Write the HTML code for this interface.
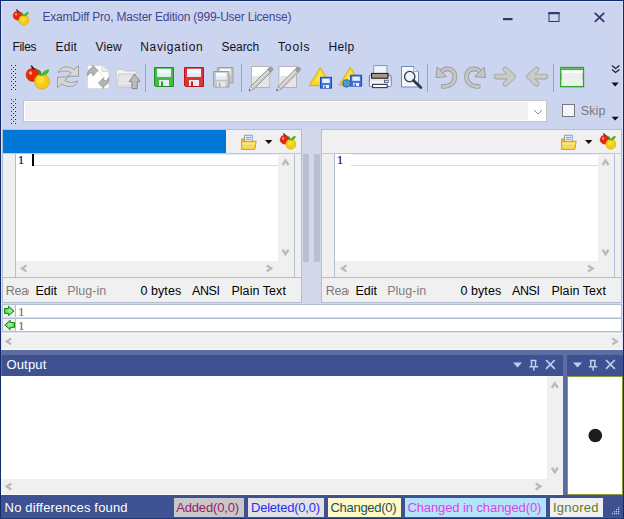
<!DOCTYPE html>
<html><head><meta charset="utf-8">
<style>
html,body{margin:0;padding:0;}
body{width:624px;height:519px;position:relative;overflow:hidden;background:#ccd5f0;font-family:"Liberation Sans",sans-serif;}
.a{position:absolute;box-sizing:border-box;}
.t{position:absolute;white-space:pre;}
svg{position:absolute;overflow:visible;}
</style></head><body>
<div class=a style='left:0px;top:0px;width:624px;height:1px;background:#102c6c;'></div>
<div class=a style='left:0px;top:0px;width:1px;height:519px;background:#102c6c;'></div>
<div class=a style='left:623px;top:0px;width:1px;height:519px;background:#102c6c;'></div>
<div class=a style='left:1px;top:1px;width:622px;height:1px;background:#d9e1fa;'></div>
<div class=a style='left:1px;top:1px;width:1px;height:352px;background:#d9e1fa;'></div>
<div class=a style='left:622px;top:1px;width:1px;height:352px;background:#d9e1fa;'></div>
<div class=a style='left:23px;top:100px;width:524px;height:22px;background:#f0f0f0;border:1px solid #c4c4c4;box-shadow:inset 0 0 0 1px #ffffff;'></div>
<div class=a style='left:528px;top:101px;width:18px;height:20px;background:#ffffff;'></div>
<div class=a style='left:562px;top:104px;width:13px;height:13px;background:#f2f6fa;border:1px solid #7a7a7a;'></div>
<div class=a style='left:2px;top:129px;width:300px;height:25px;background:#f0f0f0;border:1px solid #b4bdd2;border-bottom-color:#c0c8da;'></div>
<div class=a style='left:3px;top:130px;width:223px;height:23px;background:#0078d7;'></div>
<div class=a style='left:2px;top:154px;width:300px;height:124px;background:#f0f0f0;border:1px solid #b4bdd2;border-top:0;'></div>
<div class=a style='left:15px;top:154px;width:1px;height:123px;background:#b4bdd2;'></div>
<div class=a style='left:16px;top:154px;width:262px;height:107px;background:#ffffff;'></div>
<div class=a style='left:294px;top:154px;width:1px;height:123px;background:#b4bdd2;'></div>
<div class=a style='left:2px;top:277px;width:300px;height:26px;background:#f0f0f0;border:1px solid #b4bdd2;'></div>
<div class=a style='left:32px;top:165px;width:246px;height:1px;background:#d0def6;'></div>
<div class=a style='left:32px;top:154px;width:246px;height:1px;background:#e2ebfb;'></div>
<div class=a style='left:321px;top:129px;width:301px;height:25px;background:#f0f0f0;border:1px solid #b4bdd2;border-bottom-color:#c0c8da;'></div>
<div class=a style='left:321px;top:154px;width:301px;height:124px;background:#f0f0f0;border:1px solid #b4bdd2;border-top:0;'></div>
<div class=a style='left:334px;top:154px;width:1px;height:123px;background:#b4bdd2;'></div>
<div class=a style='left:335px;top:154px;width:263px;height:107px;background:#ffffff;'></div>
<div class=a style='left:614px;top:154px;width:1px;height:123px;background:#b4bdd2;'></div>
<div class=a style='left:321px;top:277px;width:301px;height:26px;background:#f0f0f0;border:1px solid #b4bdd2;'></div>
<div class=a style='left:351px;top:165px;width:247px;height:1px;background:#d0def6;'></div>
<div class=a style='left:351px;top:154px;width:247px;height:1px;background:#e2ebfb;'></div>
<div class=a style='left:32px;top:154px;width:2px;height:12px;background:#000000;'></div>
<div class=a style='left:302px;top:129px;width:19px;height:174px;background:#d3d9ea;'></div>
<div class=a style='left:303px;top:154px;width:6px;height:108px;background:#b9c1d1;'></div>
<div class=a style='left:314px;top:154px;width:6px;height:108px;background:#b9c1d1;'></div>
<div class=a style='left:2px;top:303px;width:620px;height:1px;background:#d3d9ea;'></div>
<div class=a style='left:2px;top:304px;width:620px;height:1px;background:#b4bdd2;'></div>
<div class=a style='left:2px;top:317px;width:620px;height:1px;background:#d8dce8;'></div>
<div class=a style='left:2px;top:318px;width:620px;height:1px;background:#b4bdd2;'></div>
<div class=a style='left:2px;top:331px;width:620px;height:1px;background:#b4bdd2;'></div>
<div class=a style='left:2px;top:332px;width:620px;height:1px;background:#d8dce8;'></div>
<div class=a style='left:2px;top:333px;width:620px;height:1px;background:#fafafa;'></div>
<div class=a style='left:2px;top:304px;width:1px;height:28px;background:#b4bdd2;'></div>
<div class=a style='left:621px;top:304px;width:1px;height:28px;background:#b4bdd2;'></div>
<div class=a style='left:3px;top:305px;width:12px;height:12px;background:#f0f0f0;'></div>
<div class=a style='left:15px;top:305px;width:1px;height:12px;background:#b4bdd2;'></div>
<div class=a style='left:16px;top:305px;width:605px;height:12px;background:#ffffff;'></div>
<div class=a style='left:3px;top:319px;width:12px;height:12px;background:#f0f0f0;'></div>
<div class=a style='left:15px;top:319px;width:1px;height:12px;background:#b4bdd2;'></div>
<div class=a style='left:16px;top:319px;width:605px;height:12px;background:#ffffff;'></div>
<div class=a style='left:2px;top:334px;width:620px;height:15px;background:#f0f0f0;'></div>
<div class=a style='left:2px;top:349px;width:620px;height:1px;background:#fafafa;'></div>
<div class=a style='left:1px;top:350px;width:622px;height:5px;background:#5d6da2;'></div>
<div class=a style='left:1px;top:355px;width:562px;height:21px;background:#3e5291;'></div>
<div class=a style='left:563px;top:355px;width:4px;height:140px;background:#5d6da2;'></div>
<div class=a style='left:567px;top:355px;width:56px;height:21px;background:#3e5291;'></div>
<div class=a style='left:1px;top:355px;width:1px;height:140px;background:#5d6da2;'></div>
<div class=a style='left:1px;top:376px;width:546px;height:103px;background:#ffffff;'></div>
<div class=a style='left:547px;top:376px;width:16px;height:103px;background:#f0f0f0;'></div>
<div class=a style='left:1px;top:479px;width:562px;height:15px;background:#f0f0f0;'></div>
<div class=a style='left:1px;top:494px;width:562px;height:1px;background:#f8f8f8;'></div>
<div class=a style='left:567px;top:376px;width:56px;height:119px;background:#ffffff;border:1px solid #8c9a3c;'></div>
<div class=a style='left:1px;top:495px;width:622px;height:24px;background:#3e5291;'></div>
<div class=a style='left:0px;top:518px;width:624px;height:1px;background:#1f3a7c;'></div>
<div class=a style='left:174px;top:498px;width:70px;height:19px;background:#c8c8c8;'></div>
<div class=a style='left:248px;top:498px;width:76px;height:19px;background:#e2e2e6;'></div>
<div class=a style='left:328px;top:498px;width:73px;height:19px;background:#fff8c8;'></div>
<div class=a style='left:405px;top:498px;width:140.5px;height:19px;background:#b4e4fc;'></div>
<div class=a style='left:550px;top:498px;width:53px;height:19px;background:#f0f0f0;'></div>
<svg width='624' height='519' style='left:0;top:0;position:absolute'><g transform='translate(13,9) scale(0.68)'>
<ellipse cx='7' cy='9.8' rx='6.9' ry='6.6' fill='#e8280c' stroke='#c01a00' stroke-width='0.6'/>
<circle cx='4.6' cy='8' r='1.7' fill='#f8b070'/>
<path d='M5.2,0.6 L8,4.4' stroke='#101010' stroke-width='1.5' fill='none'/>
<circle cx='16' cy='16.5' r='7.5' fill='#f4cc14' stroke='#d8a400' stroke-width='0.7'/>
<circle cx='14.6' cy='15' r='3.6' fill='#fae048' opacity='0.8'/>
<path d='M15.5,10.8 C12.5,10.5 11.6,6.8 12.2,4.6 C14.5,5.2 16,7.5 15.5,10.8 Z' fill='#2c9c1c'/>
<path d='M15.5,10.8 C16.2,6.8 19.6,4.4 23.2,4.6 C22.8,8.6 19.4,11 15.5,10.8 Z' fill='#44b82c'/>
</g>
<g transform='translate(26,65) scale(1.0)'>
<ellipse cx='7' cy='9.8' rx='6.9' ry='6.6' fill='#e8280c' stroke='#c01a00' stroke-width='0.6'/>
<circle cx='4.6' cy='8' r='1.7' fill='#f8b070'/>
<path d='M5.2,0.6 L8,4.4' stroke='#101010' stroke-width='1.5' fill='none'/>
<circle cx='16' cy='16.5' r='7.5' fill='#f4cc14' stroke='#d8a400' stroke-width='0.7'/>
<circle cx='14.6' cy='15' r='3.6' fill='#fae048' opacity='0.8'/>
<path d='M15.5,10.8 C12.5,10.5 11.6,6.8 12.2,4.6 C14.5,5.2 16,7.5 15.5,10.8 Z' fill='#2c9c1c'/>
<path d='M15.5,10.8 C16.2,6.8 19.6,4.4 23.2,4.6 C22.8,8.6 19.4,11 15.5,10.8 Z' fill='#44b82c'/>
</g>
<g transform='translate(280,133) scale(0.68)'>
<ellipse cx='7' cy='9.8' rx='6.9' ry='6.6' fill='#e8280c' stroke='#c01a00' stroke-width='0.6'/>
<circle cx='4.6' cy='8' r='1.7' fill='#f8b070'/>
<path d='M5.2,0.6 L8,4.4' stroke='#101010' stroke-width='1.5' fill='none'/>
<circle cx='16' cy='16.5' r='7.5' fill='#f4cc14' stroke='#d8a400' stroke-width='0.7'/>
<circle cx='14.6' cy='15' r='3.6' fill='#fae048' opacity='0.8'/>
<path d='M15.5,10.8 C12.5,10.5 11.6,6.8 12.2,4.6 C14.5,5.2 16,7.5 15.5,10.8 Z' fill='#2c9c1c'/>
<path d='M15.5,10.8 C16.2,6.8 19.6,4.4 23.2,4.6 C22.8,8.6 19.4,11 15.5,10.8 Z' fill='#44b82c'/>
</g>
<g transform='translate(600,133) scale(0.68)'>
<ellipse cx='7' cy='9.8' rx='6.9' ry='6.6' fill='#e8280c' stroke='#c01a00' stroke-width='0.6'/>
<circle cx='4.6' cy='8' r='1.7' fill='#f8b070'/>
<path d='M5.2,0.6 L8,4.4' stroke='#101010' stroke-width='1.5' fill='none'/>
<circle cx='16' cy='16.5' r='7.5' fill='#f4cc14' stroke='#d8a400' stroke-width='0.7'/>
<circle cx='14.6' cy='15' r='3.6' fill='#fae048' opacity='0.8'/>
<path d='M15.5,10.8 C12.5,10.5 11.6,6.8 12.2,4.6 C14.5,5.2 16,7.5 15.5,10.8 Z' fill='#2c9c1c'/>
<path d='M15.5,10.8 C16.2,6.8 19.6,4.4 23.2,4.6 C22.8,8.6 19.4,11 15.5,10.8 Z' fill='#44b82c'/>
</g>
<rect x='11' y='65' width='1' height='1' fill='#1a2a6a'/><rect x='15' y='65' width='1' height='1' fill='#1a2a6a'/>
<rect x='13' y='67' width='1' height='1' fill='#1a2a6a'/>
<rect x='11' y='69' width='1' height='1' fill='#1a2a6a'/><rect x='15' y='69' width='1' height='1' fill='#1a2a6a'/>
<rect x='13' y='71' width='1' height='1' fill='#1a2a6a'/>
<rect x='11' y='73' width='1' height='1' fill='#1a2a6a'/><rect x='15' y='73' width='1' height='1' fill='#1a2a6a'/>
<rect x='13' y='75' width='1' height='1' fill='#1a2a6a'/>
<rect x='11' y='77' width='1' height='1' fill='#1a2a6a'/><rect x='15' y='77' width='1' height='1' fill='#1a2a6a'/>
<rect x='13' y='79' width='1' height='1' fill='#1a2a6a'/>
<rect x='11' y='81' width='1' height='1' fill='#1a2a6a'/><rect x='15' y='81' width='1' height='1' fill='#1a2a6a'/>
<rect x='13' y='83' width='1' height='1' fill='#1a2a6a'/>
<rect x='11' y='85' width='1' height='1' fill='#1a2a6a'/><rect x='15' y='85' width='1' height='1' fill='#1a2a6a'/>
<rect x='13' y='87' width='1' height='1' fill='#1a2a6a'/>
<rect x='11' y='89' width='1' height='1' fill='#1a2a6a'/><rect x='15' y='89' width='1' height='1' fill='#1a2a6a'/>
<rect x='11' y='99' width='1' height='1' fill='#1a2a6a'/><rect x='15' y='99' width='1' height='1' fill='#1a2a6a'/>
<rect x='13' y='101' width='1' height='1' fill='#1a2a6a'/>
<rect x='11' y='103' width='1' height='1' fill='#1a2a6a'/><rect x='15' y='103' width='1' height='1' fill='#1a2a6a'/>
<rect x='13' y='105' width='1' height='1' fill='#1a2a6a'/>
<rect x='11' y='107' width='1' height='1' fill='#1a2a6a'/><rect x='15' y='107' width='1' height='1' fill='#1a2a6a'/>
<rect x='13' y='109' width='1' height='1' fill='#1a2a6a'/>
<rect x='11' y='111' width='1' height='1' fill='#1a2a6a'/><rect x='15' y='111' width='1' height='1' fill='#1a2a6a'/>
<rect x='13' y='113' width='1' height='1' fill='#1a2a6a'/>
<rect x='11' y='115' width='1' height='1' fill='#1a2a6a'/><rect x='15' y='115' width='1' height='1' fill='#1a2a6a'/>
<rect x='13' y='117' width='1' height='1' fill='#1a2a6a'/>
<rect x='11' y='119' width='1' height='1' fill='#1a2a6a'/><rect x='15' y='119' width='1' height='1' fill='#1a2a6a'/>
<rect x='13' y='121' width='1' height='1' fill='#1a2a6a'/>
<rect x='11' y='123' width='1' height='1' fill='#1a2a6a'/><rect x='15' y='123' width='1' height='1' fill='#1a2a6a'/>
<rect x='145' y='64' width='1' height='28' fill='#94a4cc'/>
<rect x='241' y='64' width='1' height='28' fill='#94a4cc'/>
<rect x='427' y='64' width='1' height='28' fill='#94a4cc'/>
<rect x='553' y='64' width='1' height='28' fill='#94a4cc'/>
<g transform='translate(54,62)' stroke='#969696' stroke-width='0.9' fill='#d6d6d6'>
<path d='M4.2,10.6 C6,4.5 14,2.8 20,7.6 L24.5,3.8 L24.5,14.3 L13.6,14.3 L17.2,11 C13,8.3 8.5,8.5 4.2,10.6 Z'/>
<path d='M23.8,18.8 C22,24.9 14,26.6 8,21.8 L3.5,25.6 L3.5,15.1 L14.4,15.1 L10.8,18.4 C15,21.1 19.5,20.9 23.8,18.8 Z'/>
</g>
<g transform='translate(84,62)'>
<path d='M3.6,3.4 L18,3.4 L24.8,9.5 L24.8,26.4 L3.6,26.4 Z' fill='#ffffff' stroke='#d4d4d4' stroke-width='0.8'/>
<path d='M18,3.4 L18,9.5 L24.8,9.5' fill='#eeeeee' stroke='#cfcfcf' stroke-width='0.8'/>
<path d='M9,3.6 L19,14.5' stroke='#d8d8d8' stroke-width='0.8'/>
<path d='M3.6,13.8 C3.4,8.6 5.4,6.2 8.6,5.8 L8.6,3.2 L14,8.6 L8.6,14 L8.6,10.8 C6.4,10.8 4.6,12 3.6,13.8 Z' fill='#b4b4b4' stroke='#8a8a8a' stroke-width='0.7' stroke-linejoin='round'/>
<path d='M24.8,15.8 C25,21 23,23.4 19.8,23.8 L19.8,26.4 L14.4,21 L19.8,15.6 L19.8,18.8 C22,18.8 23.8,17.6 24.8,15.8 Z' fill='#b4b4b4' stroke='#8a8a8a' stroke-width='0.7' stroke-linejoin='round'/>
</g>
<g transform='translate(113,64)'>
<path d='M3.2,6.8 L3.4,5.4 L11,5.4 L12,7 L23.4,7 L23.4,23.6 L3.2,23.6 Z' fill='#f2f2f2' stroke='#c4c4c4' stroke-width='0.9'/>
<path d='M5.8,10 L26.4,10 L24.4,22 L4.2,22 Z' fill='#e6e6e6' stroke='#c8c8c8' stroke-width='0.9'/>
<path d='M21.6,10 L27,17.6 L24.2,17.6 L24.2,24.6 L19,24.6 L19,17.6 L16.2,17.6 Z' fill='#bdbdbd' stroke='#7e7e7e' stroke-width='0.9'/>
</g>
<g>
<path d='M154.5,67.5 L173.5,67.5 L173.5,86.5 L155.5,86.5 L154.5,85.5 Z' fill='#44bb44' stroke='#23892a' stroke-width='1'/>
<rect x='157' y='68.8' width='14' height='8.0' fill='#f4f8ff'/>
<rect x='157' y='73.2' width='14' height='3.6' fill='#e4ecf4'/>
<rect x='159.0' y='80.0' width='10.0' height='6.0' fill='#e8ecf0'/>
<rect x='161.0' y='81.5' width='2.0' height='4.5' fill='#2a9a2a'/>
</g>
<g>
<path d='M184.5,67.5 L203.5,67.5 L203.5,86.5 L185.5,86.5 L184.5,85.5 Z' fill='#e03434' stroke='#b81818' stroke-width='1'/>
<rect x='187' y='68.8' width='14' height='8.0' fill='#f4f8ff'/>
<rect x='187' y='73.2' width='14' height='3.6' fill='#e4ecf4'/>
<rect x='189.0' y='80.0' width='10.0' height='6.0' fill='#e8ecf0'/>
<rect x='191.0' y='81.5' width='2.0' height='4.5' fill='#c02020'/>
</g>
<g>
<path d='M217.5,67.5 L233.0,67.5 L233.0,83.0 L218.5,83.0 L217.5,82.0 Z' fill='#c4c4c4' stroke='#a0a0a0' stroke-width='1'/>
<rect x='220' y='68.8' width='10.5' height='6.6000000000000005' fill='#f4f8ff'/>
<rect x='220' y='72.42999999999999' width='10.5' height='2.97' fill='#e4ecf4'/>
<rect x='221.125' y='77.725' width='8.25' height='4.95' fill='#e8ecf0'/>
<rect x='222.775' y='78.96249999999999' width='1.6500000000000001' height='3.7125000000000004' fill='#a8a8a8'/>
</g>
<g>
<path d='M213.5,71.5 L229.0,71.5 L229.0,87.0 L214.5,87.0 L213.5,86.0 Z' fill='#c8c8c8' stroke='#9c9c9c' stroke-width='1'/>
<rect x='216' y='72.8' width='10.5' height='6.6000000000000005' fill='#f4f8ff'/>
<rect x='216' y='76.42999999999999' width='10.5' height='2.97' fill='#e4ecf4'/>
<rect x='217.125' y='81.725' width='8.25' height='4.95' fill='#e8ecf0'/>
<rect x='218.775' y='82.96249999999999' width='1.6500000000000001' height='3.7125000000000004' fill='#a0a0a0'/>
</g>
<g transform='translate(247,62)'>
<rect x='4.5' y='4.5' width='17.5' height='21' fill='#ffffff' stroke='#b4b4b4' stroke-width='1'/>
<rect x='5' y='14' width='16.5' height='11' fill='#e6e6e6'/>
<path d='M3.5,24.5 L20.5,7.5 L23.5,10.5 L6.5,27.5 Z' fill='#c8c8c8' stroke='#909090' stroke-width='0.8'/>
<path d='M20.5,7.5 L22.5,5.5 C23.2,4.8 24.2,4.8 24.9,5.5 L25.5,6.1 C26.2,6.8 26.2,7.8 25.5,8.5 L23.5,10.5 Z' fill='#a0a0a0' stroke='#888' stroke-width='0.6'/>
<path d='M3.5,24.5 L6.5,27.5 L1.8,28.8 Z' fill='#e8e8e8' stroke='#888' stroke-width='0.5'/>
<path d='M2.6,26.9 L3.9,28.2 L1.8,28.8 Z' fill='#404040'/>
<path d='M5.5,25 L21.5,9' stroke='#eeeeee' stroke-width='0.9'/>
</g>
<g transform='translate(274.5,62)'>
<rect x='4.5' y='4.5' width='17.5' height='21' fill='#ffffff' stroke='#b4b4b4' stroke-width='1'/>
<rect x='5' y='14' width='16.5' height='11' fill='#e6e6e6'/>
<path d='M3.5,24.5 L20.5,7.5 L23.5,10.5 L6.5,27.5 Z' fill='#c8c8c8' stroke='#909090' stroke-width='0.8'/>
<path d='M20.5,7.5 L22.5,5.5 C23.2,4.8 24.2,4.8 24.9,5.5 L25.5,6.1 C26.2,6.8 26.2,7.8 25.5,8.5 L23.5,10.5 Z' fill='#a0a0a0' stroke='#888' stroke-width='0.6'/>
<path d='M3.5,24.5 L6.5,27.5 L1.8,28.8 Z' fill='#e8e8e8' stroke='#888' stroke-width='0.5'/>
<path d='M2.6,26.9 L3.9,28.2 L1.8,28.8 Z' fill='#404040'/>
<path d='M5.5,25 L21.5,9' stroke='#eeeeee' stroke-width='0.9'/>
</g>
<g transform='translate(306,63)'>
<path d='M14.3,4.6 L25.5,22.6 L3.2,22.6 Z' fill='#f6d428' stroke='#e0a410' stroke-width='0.9' stroke-linejoin='round'/>
<path d='M14.3,7.5 L21,19 L8,19 Z' fill='#fae868' opacity='0.6'/>
</g>
<g>
<rect x='320.5' y='77.3' width='11' height='10.8' fill='#3f78dc' stroke='#1d4cb8' stroke-width='1'/>
<rect x='322.2' y='78.6' width='7.6' height='4.4' fill='#e6eef8'/>
<rect x='323.2' y='85' width='5.8' height='3' fill='#f4f4f4'/>
<rect x='324.4' y='85.6' width='1.4' height='2.4' fill='#2050c0'/>
</g>
<g transform='translate(336,62.5)'>
<path d='M14.3,4.6 L25.5,22.6 L3.2,22.6 Z' fill='#f6d428' stroke='#e0a410' stroke-width='0.9' stroke-linejoin='round'/>
<path d='M14.3,7.5 L21,19 L8,19 Z' fill='#fae868' opacity='0.6'/>
</g>
<g>
<rect x='350.6' y='75.2' width='11' height='10.9' fill='#3f78dc' stroke='#1d4cb8' stroke-width='1'/>
<rect x='352.3' y='76.6' width='7.6' height='4.2' fill='#e6eef8'/>
<rect x='353.3' y='83' width='5.8' height='3' fill='#f4f4f4'/>
<rect x='354.5' y='83.6' width='1.4' height='2.4' fill='#2050c0'/>
<circle cx='346.5' cy='83.4' r='3.8' fill='#4a90d8' stroke='#2060a8' stroke-width='0.8'/>
<path d='M344,81 C345.5,82 346,83.5 345,85.5 M348,80.5 C349,82 349.5,84 348.5,86' stroke='#60c860' stroke-width='1' fill='none'/>
</g>
<g transform='translate(366,62)'>
<rect x='7.8' y='3.6' width='13.2' height='9.8' fill='#eef4fc' stroke='#7890c0' stroke-width='0.9'/>
<rect x='3.4' y='13.2' width='21.8' height='11.2' rx='1' fill='#e6e6ec' stroke='#5a6a9a' stroke-width='0.9'/>
<rect x='3.9' y='19' width='20.8' height='5' fill='#f4f4f6'/>
<rect x='5.6' y='11.4' width='16.4' height='4.8' fill='#9c9a94' stroke='#111' stroke-width='1'/>
<path d='M7,14.4 L20.6,14.4' stroke='#c89848' stroke-width='0.8' stroke-dasharray='1.2,1.2'/>
<rect x='18.4' y='18.2' width='3.8' height='2.2' fill='#d0f8c8' stroke='#3a4a7a' stroke-width='0.8'/>
<rect x='6.6' y='22.4' width='14.6' height='3.2' fill='#ffffff' stroke='#303840' stroke-width='1.1'/>
</g>
<g transform='translate(397,62)'>
<path d='M4.5,4.5 L16.5,4.5 L21.5,9.5 L21.5,25 L4.5,25 Z' fill='#f4f8fc' stroke='#6c88bc' stroke-width='1'/>
<path d='M16.5,4.5 L16.5,9.5 L21.5,9.5' fill='#dde6f2' stroke='#8aa0c8' stroke-width='0.8'/>
<circle cx='12.7' cy='14.6' r='5.2' fill='#eaf2fc' stroke='#363a48' stroke-width='1.3'/>
<path d='M16.5,18.5 L23.8,25.6' stroke='#303848' stroke-width='2.8' stroke-linecap='round'/>
</g>
<g transform='translate(432,62)'><path d='M9.5,9.5 C12.5,6.2 18,5.8 21.2,9.5 C24.5,13.5 23,20.5 18,23 C15.5,24.2 13,24.5 11,24.4' fill='none' stroke='#969696' stroke-width='4.6' stroke-linecap='round'/>
<path d='M9.5,9.5 C12.5,6.2 18,5.8 21.2,9.5 C24.5,13.5 23,20.5 18,23 C15.5,24.2 13,24.5 11,24.4' fill='none' stroke='#c6c6c6' stroke-width='3' stroke-linecap='round'/>
<path d='M5,5 L4,15.6 L14.6,14.6 Z' fill='#c6c6c6' stroke='#969696' stroke-width='0.9' stroke-linejoin='round'/></g>
<g transform='translate(489.4,62) scale(-1,1)'><path d='M9.5,9.5 C12.5,6.2 18,5.8 21.2,9.5 C24.5,13.5 23,20.5 18,23 C15.5,24.2 13,24.5 11,24.4' fill='none' stroke='#969696' stroke-width='4.6' stroke-linecap='round'/>
<path d='M9.5,9.5 C12.5,6.2 18,5.8 21.2,9.5 C24.5,13.5 23,20.5 18,23 C15.5,24.2 13,24.5 11,24.4' fill='none' stroke='#c6c6c6' stroke-width='3' stroke-linecap='round'/>
<path d='M5,5 L4,15.6 L14.6,14.6 Z' fill='#c6c6c6' stroke='#969696' stroke-width='0.9' stroke-linejoin='round'/></g>
<g transform='translate(492,62)'><path d='M4.5,14.6 L20,14.6 M13.5,7.5 L21,14.6 L13.5,21.8' fill='none' stroke='#a2a2a2' stroke-width='5.6' stroke-linecap='round' stroke-linejoin='round'/>
<path d='M4.5,14.6 L20,14.6 M13.5,7.5 L21,14.6 L13.5,21.8' fill='none' stroke='#cacaca' stroke-width='4' stroke-linecap='round' stroke-linejoin='round'/></g>
<g transform='translate(550,62) scale(-1,1)'><path d='M4.5,14.6 L20,14.6 M13.5,7.5 L21,14.6 L13.5,21.8' fill='none' stroke='#a2a2a2' stroke-width='5.6' stroke-linecap='round' stroke-linejoin='round'/>
<path d='M4.5,14.6 L20,14.6 M13.5,7.5 L21,14.6 L13.5,21.8' fill='none' stroke='#cacaca' stroke-width='4' stroke-linecap='round' stroke-linejoin='round'/></g>
<g transform='translate(556,62)'>
<rect x='4.8' y='5.6' width='22.6' height='19' fill='#eeeeee' stroke='#36a236' stroke-width='1.5'/>
<rect x='5.5' y='6.3' width='21.2' height='2' fill='#44b444'/>
<rect x='5.5' y='8.3' width='21.2' height='2.6' fill='#ffffff'/>
<rect x='5.5' y='17.5' width='21.2' height='6.4' fill='#e8f6e4'/>
</g>
<path d='M612,65.6 L615.6,68.4 L619.4,65.6 M612,69.6 L615.6,72.4 L619.4,69.6' fill='none' stroke='#202020' stroke-width='1.3'/>
<path d='M611.5,82.6 L618.8,82.6 L615.15,86.4 Z' fill='#111'/>
<path d='M611.5,116.8 L618.8,116.8 L615.15,120.6 Z' fill='#111'/>
<rect x='503' y='18' width='9.5' height='2.2' fill='#2c3a6a'/>
<rect x='549' y='12.5' width='10' height='9' fill='none' stroke='#2c3a6a' stroke-width='1'/>
<rect x='548.5' y='12' width='11' height='2.2' fill='#2c3a6a'/>
<path d='M594.8,12.8 L604.2,21.8 M604.2,12.8 L594.8,21.8' stroke='#34386e' stroke-width='1.8'/>
<g transform='translate(241,134.8)'>
<rect x='3.6' y='0.4' width='7.6' height='6.8' fill='#eaf2fc' stroke='#6a8ac0' stroke-width='0.8'/>
<path d='M5,2.6 L9.8,2.6 M5,4.4 L9.8,4.4' stroke='#6a8ac0' stroke-width='0.8'/>
<path d='M0.6,4 L3.4,4 L3.4,6 L0.6,6 Z' fill='#f0d060' stroke='#c89020' stroke-width='0.7'/>
<path d='M0.6,6.5 L15.2,6.5 L13.8,14.6 L0.6,14.6 Z' fill='#f6da58' stroke='#c89420' stroke-width='0.9'/>
<path d='M1.4,9 L14.6,9' stroke='#fff0a0' stroke-width='0.8'/>
</g>
<g transform='translate(561,134.8)'>
<rect x='3.6' y='0.4' width='7.6' height='6.8' fill='#eaf2fc' stroke='#6a8ac0' stroke-width='0.8'/>
<path d='M5,2.6 L9.8,2.6 M5,4.4 L9.8,4.4' stroke='#6a8ac0' stroke-width='0.8'/>
<path d='M0.6,4 L3.4,4 L3.4,6 L0.6,6 Z' fill='#f0d060' stroke='#c89020' stroke-width='0.7'/>
<path d='M0.6,6.5 L15.2,6.5 L13.8,14.6 L0.6,14.6 Z' fill='#f6da58' stroke='#c89420' stroke-width='0.9'/>
<path d='M1.4,9 L14.6,9' stroke='#fff0a0' stroke-width='0.8'/>
</g>
<path d='M265,140 L272.4,140 L268.7,144 Z' fill='#111'/>
<path d='M585,140 L592.4,140 L588.7,144 Z' fill='#111'/>
<path d='M282.5,165.15 L285.5,160.65 L288.5,165.15' fill='none' stroke='#b8b8b8' stroke-width='2.3'/>
<path d='M602.5,165.15 L605.5,160.65 L608.5,165.15' fill='none' stroke='#b8b8b8' stroke-width='2.3'/>
<path d='M282.5,249.65 L285.5,254.15 L288.5,249.65' fill='none' stroke='#b8b8b8' stroke-width='2.3'/>
<path d='M602.6,249.65 L605.6,254.15 L608.6,249.65' fill='none' stroke='#b8b8b8' stroke-width='2.3'/>
<path d='M26.45,265.4 L21.95,268.4 L26.45,271.4' fill='none' stroke='#b8b8b8' stroke-width='2.3'/>
<path d='M346.45,265.4 L341.95,268.4 L346.45,271.4' fill='none' stroke='#b8b8b8' stroke-width='2.3'/>
<path d='M266.75,265.4 L271.25,268.4 L266.75,271.4' fill='none' stroke='#b8b8b8' stroke-width='2.3'/>
<path d='M588.05,265.6 L592.55,268.6 L588.05,271.6' fill='none' stroke='#b8b8b8' stroke-width='2.3'/>
<path d='M11.25,338.4 L6.75,341.4 L11.25,344.4' fill='none' stroke='#b8b8b8' stroke-width='2.3'/>
<path d='M612.25,338.4 L616.75,341.4 L612.25,344.4' fill='none' stroke='#b8b8b8' stroke-width='2.3'/>
<path d='M551.8,387.85 L554.8,383.35 L557.8,387.85' fill='none' stroke='#b8b8b8' stroke-width='2.3'/>
<path d='M551.8,467.75 L554.8,472.25 L557.8,467.75' fill='none' stroke='#b8b8b8' stroke-width='2.3'/>
<path d='M11.25,483.5 L6.75,486.5 L11.25,489.5' fill='none' stroke='#b8b8b8' stroke-width='2.3'/>
<path d='M535.75,483.5 L540.25,486.5 L535.75,489.5' fill='none' stroke='#b8b8b8' stroke-width='2.3'/>
<defs><radialGradient id='ga' cx='0.55' cy='0.5' r='0.6'><stop offset='0' stop-color='#b0f0b0'/><stop offset='1' stop-color='#40c040'/></radialGradient></defs>
<path d='M4.5,308.5 L8.6,308.5 L8.6,306.3 L14,311 L8.6,315.6 L8.6,313.4 L4.5,313.4 Z' fill='url(#ga)' stroke='#128a12' stroke-width='1' stroke-linejoin='round'/>
<path d='M14.5,322.5 L10.2,322.5 L10.2,320.2 L4.8,325 L10.2,329.7 L10.2,327.4 L14.5,327.4 Z' fill='url(#ga)' stroke='#128a12' stroke-width='1' stroke-linejoin='round'/>
<path d='M513,362.6 L522,362.6 L517.5,367.6 Z' fill='#c4cdee'/>
<path d='M531.5,360.5 L531.5,366.5 M535.5,360.5 L535.5,366.5 M530.5,360.5 L536.5,360.5 M529.5,366.8 L538.1,366.8 M533.8,367 L533.8,370.6' stroke='#c4cdee' stroke-width='1.5' fill='none'/>
<path d='M546,360 L554.8,368.8 M554.8,360 L546,368.8' stroke='#c4cdee' stroke-width='1.7'/>
<path d='M573,362.6 L582,362.6 L577.5,367.6 Z' fill='#c4cdee'/>
<path d='M590.8,360.5 L590.8,366.5 M594.8,360.5 L594.8,366.5 M589.8,360.5 L595.8,360.5 M588.8,366.8 L597.4,366.8 M593.0999999999999,367 L593.0999999999999,370.6' stroke='#c4cdee' stroke-width='1.5' fill='none'/>
<path d='M606,360 L614.8,368.8 M614.8,360 L606,368.8' stroke='#c4cdee' stroke-width='1.7'/>
<circle cx='595.3' cy='435.5' r='6.8' fill='#1c1c1c'/>
<rect x='618' y='507' width='1.2' height='1.2' fill='#c8d0e0'/>
<rect x='616' y='509' width='1.2' height='1.2' fill='#c8d0e0'/>
<rect x='618' y='509' width='1.2' height='1.2' fill='#c8d0e0'/>
<rect x='614' y='511' width='1.2' height='1.2' fill='#c8d0e0'/>
<rect x='616' y='511' width='1.2' height='1.2' fill='#c8d0e0'/>
<rect x='618' y='511' width='1.2' height='1.2' fill='#c8d0e0'/>
<rect x='612' y='513' width='1.2' height='1.2' fill='#c8d0e0'/>
<rect x='614' y='513' width='1.2' height='1.2' fill='#c8d0e0'/>
<rect x='616' y='513' width='1.2' height='1.2' fill='#c8d0e0'/>
<rect x='618' y='513' width='1.2' height='1.2' fill='#c8d0e0'/>
<path d='M534,110 L538,114 L542,110' fill='none' stroke='#8a8a8a' stroke-width='1'/></svg>
<div class=t style='left:42.5px;top:10.80px;font-family:"Liberation Sans", sans-serif;font-size:12px;line-height:12px;color:#46468e;letter-spacing:-0.222px;'>ExamDiff Pro, Master Edition (999-User License)</div>
<div class=t style='left:12.5px;top:40.80px;font-family:"Liberation Sans", sans-serif;font-size:12px;line-height:12px;color:#111122;letter-spacing:-0.336px;'>Files</div>
<div class=t style='left:55.6px;top:40.80px;font-family:"Liberation Sans", sans-serif;font-size:12px;line-height:12px;color:#111122;letter-spacing:0.204px;'>Edit</div>
<div class=t style='left:95.6px;top:40.80px;font-family:"Liberation Sans", sans-serif;font-size:12px;line-height:12px;color:#111122;letter-spacing:0.134px;'>View</div>
<div class=t style='left:140.3px;top:40.80px;font-family:"Liberation Sans", sans-serif;font-size:12px;line-height:12px;color:#111122;letter-spacing:0.622px;'>Navigation</div>
<div class=t style='left:221.5px;top:40.80px;font-family:"Liberation Sans", sans-serif;font-size:12px;line-height:12px;color:#111122;letter-spacing:-0.066px;'>Search</div>
<div class=t style='left:278px;top:40.80px;font-family:"Liberation Sans", sans-serif;font-size:12px;line-height:12px;color:#111122;letter-spacing:0.871px;'>Tools</div>
<div class=t style='left:328.5px;top:40.80px;font-family:"Liberation Sans", sans-serif;font-size:12px;line-height:12px;color:#111122;letter-spacing:0.304px;'>Help</div>
<div class=t style='left:580.8px;top:104.88px;font-family:"Liberation Sans", sans-serif;font-size:12.5px;line-height:12.5px;color:#7a7a7a;letter-spacing:0.091px;'>Skip</div>
<div class=t style='left:5.8px;top:285.38px;font-family:"Liberation Sans", sans-serif;font-size:12.5px;line-height:12.5px;color:#7a7a7a;letter-spacing:0.000px;width:23.6px;overflow:hidden;letter-spacing:-0.3px;'>Reac</div>
<div class=t style='left:35.4px;top:285.38px;font-family:"Liberation Sans", sans-serif;font-size:12.5px;line-height:12.5px;color:#000000;letter-spacing:0.018px;'>Edit</div>
<div class=t style='left:67.2px;top:285.38px;font-family:"Liberation Sans", sans-serif;font-size:12.5px;line-height:12.5px;color:#808080;letter-spacing:0.013px;'>Plug-in</div>
<div class=t style='left:140.4px;top:285.38px;font-family:"Liberation Sans", sans-serif;font-size:12.5px;line-height:12.5px;color:#000000;letter-spacing:0.081px;'>0 bytes</div>
<div class=t style='left:192.1px;top:285.38px;font-family:"Liberation Sans", sans-serif;font-size:12.5px;line-height:12.5px;color:#000000;letter-spacing:-0.429px;'>ANSI</div>
<div class=t style='left:231.4px;top:285.38px;font-family:"Liberation Sans", sans-serif;font-size:12.5px;line-height:12.5px;color:#000000;letter-spacing:0.059px;'>Plain Text</div>
<div class=t style='left:18.1px;top:154.30px;font-family:"Liberation Serif", serif;font-size:12px;line-height:12px;color:#000078;letter-spacing:0.000px;-webkit-text-stroke:0.2px #000078;'>1</div>
<div class=t style='left:325.8px;top:285.38px;font-family:"Liberation Sans", sans-serif;font-size:12.5px;line-height:12.5px;color:#7a7a7a;letter-spacing:0.000px;width:23.6px;overflow:hidden;letter-spacing:-0.3px;'>Reac</div>
<div class=t style='left:355.4px;top:285.38px;font-family:"Liberation Sans", sans-serif;font-size:12.5px;line-height:12.5px;color:#000000;letter-spacing:0.018px;'>Edit</div>
<div class=t style='left:387.2px;top:285.38px;font-family:"Liberation Sans", sans-serif;font-size:12.5px;line-height:12.5px;color:#808080;letter-spacing:0.013px;'>Plug-in</div>
<div class=t style='left:460.4px;top:285.38px;font-family:"Liberation Sans", sans-serif;font-size:12.5px;line-height:12.5px;color:#000000;letter-spacing:0.081px;'>0 bytes</div>
<div class=t style='left:512.1px;top:285.38px;font-family:"Liberation Sans", sans-serif;font-size:12.5px;line-height:12.5px;color:#000000;letter-spacing:-0.429px;'>ANSI</div>
<div class=t style='left:551.4px;top:285.38px;font-family:"Liberation Sans", sans-serif;font-size:12.5px;line-height:12.5px;color:#000000;letter-spacing:0.059px;'>Plain Text</div>
<div class=t style='left:337.1px;top:154.30px;font-family:"Liberation Serif", serif;font-size:12px;line-height:12px;color:#000078;letter-spacing:0.000px;-webkit-text-stroke:0.2px #000078;'>1</div>
<div class=t style='left:18.2px;top:306.30px;font-family:"Liberation Serif", serif;font-size:12px;line-height:12px;color:#606060;letter-spacing:0.000px;-webkit-text-stroke:0.1px #606060;'>1</div>
<div class=t style='left:18.2px;top:320.30px;font-family:"Liberation Serif", serif;font-size:12px;line-height:12px;color:#606060;letter-spacing:0.000px;-webkit-text-stroke:0.1px #606060;'>1</div>
<div class=t style='left:6.4px;top:358.45px;font-family:"Liberation Sans", sans-serif;font-size:13px;line-height:13px;color:#ffffff;letter-spacing:0.194px;'>Output</div>
<div class=t style='left:4.6px;top:501.45px;font-family:"Liberation Sans", sans-serif;font-size:13px;line-height:13px;color:#ffffff;letter-spacing:0.172px;'>No differences found</div>
<div class=t style='left:176.2px;top:501.45px;font-family:"Liberation Sans", sans-serif;font-size:13px;line-height:13px;color:#96206a;letter-spacing:-0.148px;'>Added(0,0)</div>
<div class=t style='left:251px;top:501.45px;font-family:"Liberation Sans", sans-serif;font-size:13px;line-height:13px;color:#2a2af8;letter-spacing:-0.232px;'>Deleted(0,0)</div>
<div class=t style='left:330.5px;top:501.45px;font-family:"Liberation Sans", sans-serif;font-size:13px;line-height:13px;color:#1a5050;letter-spacing:-0.295px;'>Changed(0)</div>
<div class=t style='left:407.4px;top:501.45px;font-family:"Liberation Sans", sans-serif;font-size:13px;line-height:13px;color:#e040e8;letter-spacing:-0.095px;'>Changed in changed(0)</div>
<div class=t style='left:552.9px;top:501.45px;font-family:"Liberation Sans", sans-serif;font-size:13px;line-height:13px;color:#5f7a26;letter-spacing:0.234px;'>Ignored</div>
</body></html>
